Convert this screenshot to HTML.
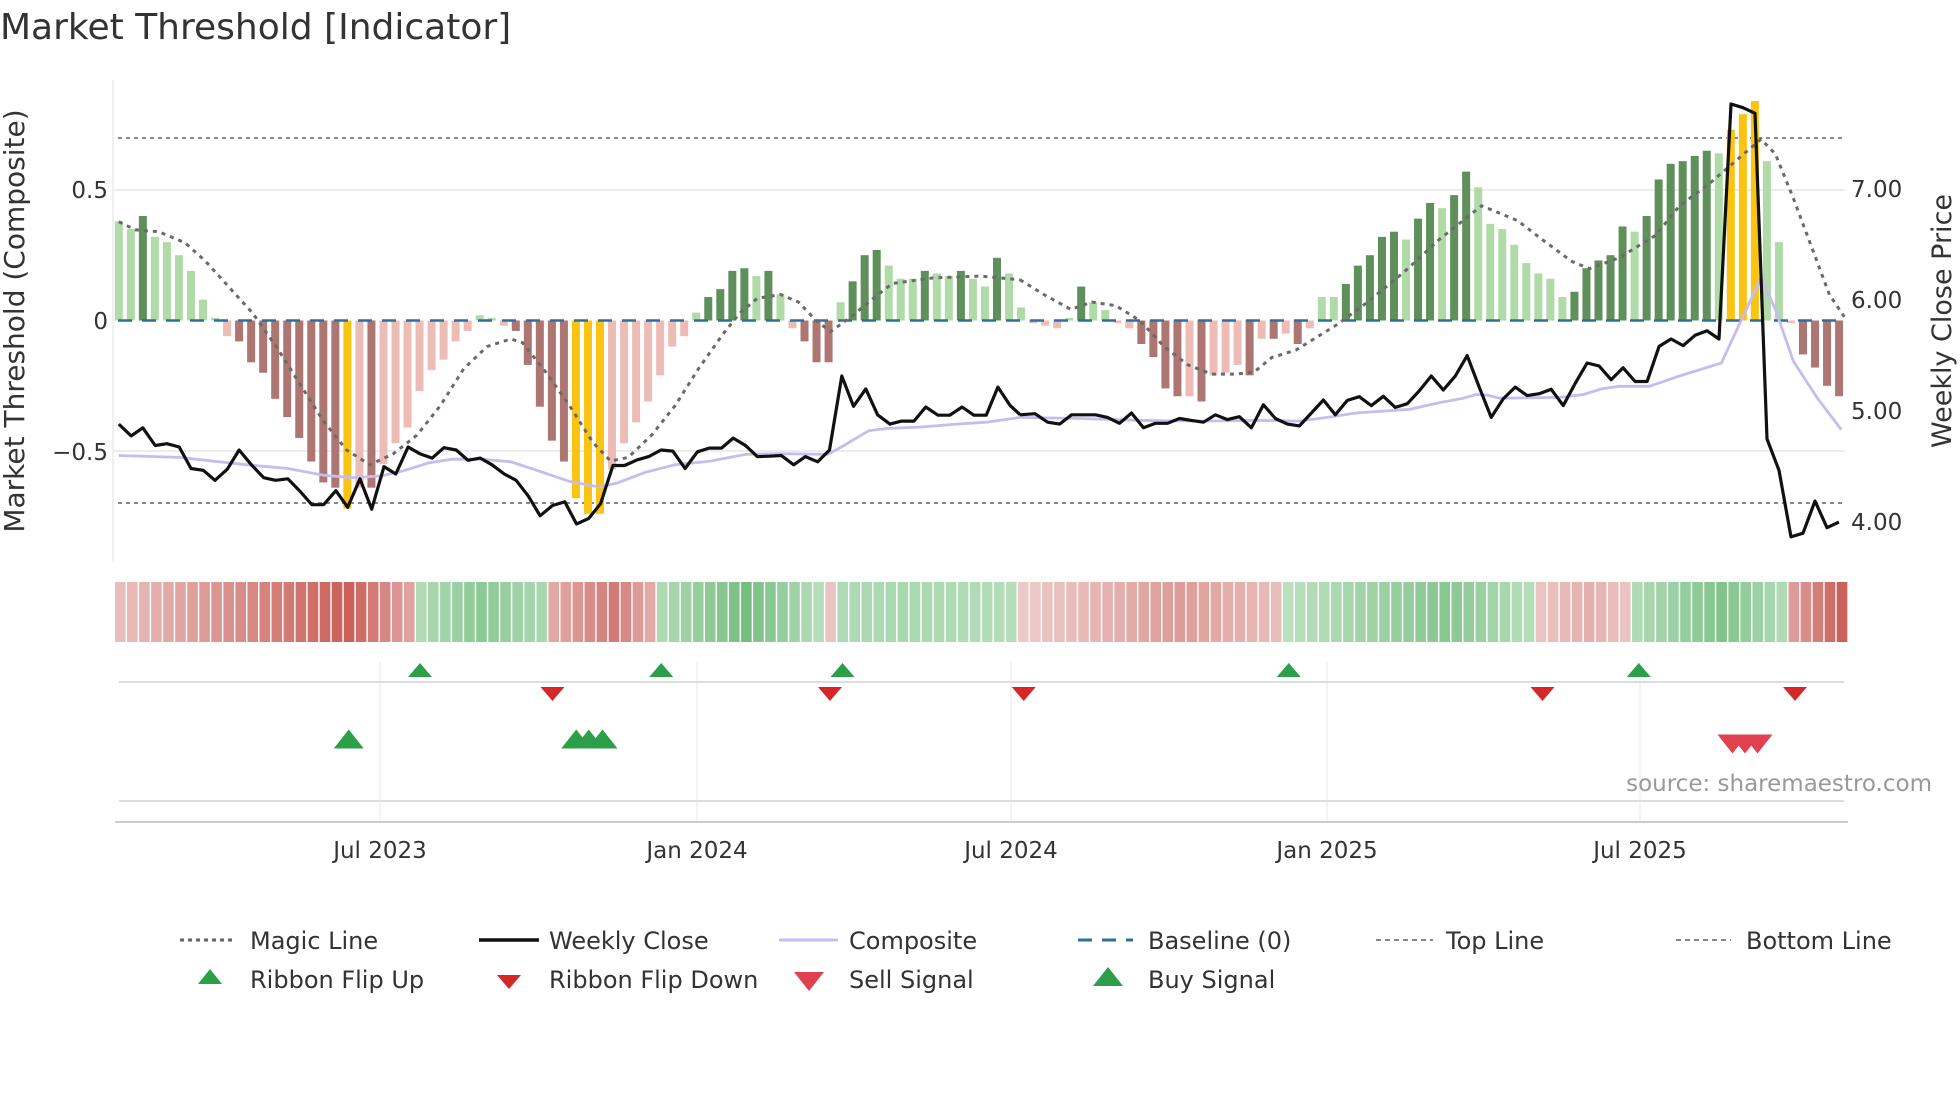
<!DOCTYPE html>
<html><head><meta charset="utf-8"><style>
html,body{margin:0;padding:0;background:#fff;}
svg{display:block;font-family:"DejaVu Sans","Liberation Sans",sans-serif;}
</style></head><body>
<svg id="s" width="1960" height="1102" viewBox="0 0 1960 1102" xmlns="http://www.w3.org/2000/svg">
<rect width="1960" height="1102" fill="#fff"/>
<text x="0" y="39" font-size="36" fill="#333">Market Threshold [Indicator]</text>
<line x1="113" y1="190" x2="1845" y2="190" stroke="#ececec" stroke-width="2"/>
<line x1="113" y1="451" x2="1845" y2="451" stroke="#ececec" stroke-width="2"/>
<line x1="113" y1="80" x2="113" y2="562" stroke="#ececec" stroke-width="1.5"/>
<line x1="118" y1="138" x2="1842" y2="138" stroke="#888" stroke-width="2" stroke-dasharray="4,4"/>
<line x1="118" y1="503" x2="1842" y2="503" stroke="#888" stroke-width="2" stroke-dasharray="4,4"/>
<g id="bars"></g>
<line x1="118" y1="320.5" x2="1842" y2="320.5" stroke="#2f6f9e" stroke-width="2.5" stroke-dasharray="14,10"/>
<g id="lines"></g>
<g font-size="23" fill="#333">
<text x="108" y="198" text-anchor="end">0.5</text>
<text x="108" y="329" text-anchor="end">0</text>
<text x="108" y="460" text-anchor="end">−0.5</text>
<text x="1851" y="197">7.00</text>
<text x="1851" y="308">6.00</text>
<text x="1851" y="419">5.00</text>
<text x="1851" y="530">4.00</text>
</g>
<text transform="translate(24,321) rotate(-90)" font-size="28" fill="#333" text-anchor="middle">Market Threshold (Composite)</text>
<text transform="translate(1951,321) rotate(-90)" font-size="27" fill="#333" text-anchor="middle">Weekly Close Price</text>
<g id="rib"></g>
<g stroke="#f0f0f0" stroke-width="1.5">
<line x1="380" y1="662" x2="380" y2="822"/><line x1="697" y1="662" x2="697" y2="822"/><line x1="1011" y1="662" x2="1011" y2="822"/><line x1="1327" y1="662" x2="1327" y2="822"/><line x1="1640" y1="662" x2="1640" y2="822"/>
</g>
<line x1="119" y1="682" x2="1844" y2="682" stroke="#ddd" stroke-width="2"/>
<line x1="119" y1="801" x2="1844" y2="801" stroke="#ddd" stroke-width="2"/>
<line x1="115" y1="822" x2="1848" y2="822" stroke="#ccc" stroke-width="2"/>
<g id="sig"></g>
<text x="1932" y="791" font-size="23" fill="#999" text-anchor="end">source: sharemaestro.com</text>
<g font-size="23" fill="#333" text-anchor="middle">
<text x="380" y="858">Jul 2023</text><text x="697" y="858">Jan 2024</text><text x="1011" y="858">Jul 2024</text><text x="1327" y="858">Jan 2025</text><text x="1640" y="858">Jul 2025</text>
</g>
<g font-size="24" fill="#333">
<line x1="180" y1="940" x2="235" y2="940" stroke="#666" stroke-width="3" stroke-dasharray="4,4"/><text x="250" y="949">Magic Line</text>
<line x1="479" y1="940" x2="539" y2="940" stroke="#111" stroke-width="3.5"/><text x="549" y="949">Weekly Close</text>
<line x1="779" y1="940" x2="838" y2="940" stroke="#c5bdf0" stroke-width="3"/><text x="849" y="949">Composite</text>
<line x1="1078" y1="940" x2="1133" y2="940" stroke="#2f6f9e" stroke-width="3" stroke-dasharray="14,10"/><text x="1148" y="949">Baseline (0)</text>
<line x1="1376" y1="940" x2="1433" y2="940" stroke="#888" stroke-width="2" stroke-dasharray="5,4"/><text x="1446" y="949">Top Line</text>
<line x1="1676" y1="940" x2="1731" y2="940" stroke="#888" stroke-width="2" stroke-dasharray="5,4"/><text x="1746" y="949">Bottom Line</text>
<polygon points="210,969 198,984 222,984" fill="#2ca048"/><text x="250" y="988">Ribbon Flip Up</text>
<polygon points="497,975 521,975 509,989" fill="#d62728"/><text x="549" y="988">Ribbon Flip Down</text>
<polygon points="794,972 824,972 809,991" fill="#e0404f"/><text x="849" y="988">Sell Signal</text>
<polygon points="1108,967 1093,986 1123,986" fill="#2ca048"/><text x="1148" y="988">Buy Signal</text>
</g>
</svg>
<script>
var NS="http://www.w3.org/2000/svg";
function el(p,t,a){var e=document.createElementNS(NS,t);for(var k in a)e.setAttribute(k,a[k]);p.appendChild(e);return e;}
var data="L.38 L.35 G.40 L.32 L.30 L.25 L.19 L.08 L.01 p-.06 r-.08 r-.16 r-.20 r-.30 r-.37 r-.45 r-.54 r-.62 r-.64 y-.72 p-.64 r-.64 p-.55 p-.47 p-.41 p-.27 p-.19 p-.15 p-.08 p-.04 L.02 L.01 p-.02 r-.04 r-.17 r-.33 r-.46 r-.54 y-.68 y-.74 y-.74 p-.57 p-.47 p-.39 p-.31 p-.21 p-.10 p-.06 L.03 G.09 G.12 G.19 G.20 L.17 G.19 L.10 p-.03 r-.08 r-.16 r-.16 L.07 G.15 G.25 G.27 L.21 L.16 L.16 G.19 L.18 L.17 G.19 L.16 L.13 G.24 L.18 L.05 p-.01 p-.02 p-.03 L.01 G.13 L.07 L.04 p-.01 p-.03 r-.09 r-.14 r-.26 r-.29 p-.29 r-.31 p-.21 p-.20 p-.17 r-.21 p-.07 r-.07 p-.05 r-.09 p-.03 L.09 L.09 G.14 G.21 G.25 G.32 G.34 L.31 G.39 G.45 L.43 G.48 G.57 L.51 L.37 L.35 L.29 L.22 L.18 L.16 L.09 G.11 G.20 G.23 G.25 G.36 L.34 G.40 G.54 G.60 G.61 G.63 G.65 L.64 y.73 y.79 y.84 L.61 L.30 p-.01 r-.13 r-.18 r-.25 r-.29".split(" ");
var col={L:"#b0dba9",G:"#5f8f5b",p:"#edbcb7",r:"#ad7672",y:"#fbc412"};
var bg=document.getElementById("bars");
data.forEach(function(d,i){var c=d[0],v=parseFloat(d.slice(1));var x=118.8+i*12.03;var h=v*261.2;
 var y=h>0?320.5-h:320.5;el(bg,"rect",{x:x-4,y:y,width:8,height:Math.max(Math.abs(h),0.5),fill:col[c]});});
var lg=document.getElementById("lines");
function pl(pts,tx,sx,style){var s=pts.map(function(p){return (tx+p[0]/sx).toFixed(1)+","+(80+p[1]/2.703).toFixed(1);}).join(" ");
 var a={points:s,fill:"none"};for(var k in style)a[k]=style[k];el(lg,"polyline",a);}
var comp1=[[32,1015],[135,1020],[250,1040],[320,1050],[380,1068],[430,1075],[480,1070],[520,1055],[560,1035],[600,1025],[650,1025],[700,1032],[750,1058],[800,1085],[850,1100],[880,1090],[930,1060],[980,1040],[1040,1030],[1100,1012],[1160,1010],[1240,1012],[1260,995],[1310,948],[1340,942],[1400,938],[1460,930],[1510,925],[1568,912]];
var comp2=[[0,912],[100,915],[200,920],[300,922],[400,920],[466,922],[520,910],[560,900],[650,890],[700,872],[740,860],[760,850],[780,852],[800,860],[900,858],[940,850],[970,835],[1000,828],[1050,828],[1100,800],[1170,765],[1200,660],[1236,535],[1260,620],[1290,760],[1330,860],[1370,945]];
var mag1=[[32,383],[60,405],[100,410],[145,440],[180,490],[220,560],[260,630],[300,720],[340,820],[380,920],[420,1000],[460,1040],[500,1010],[540,960],[580,880],[620,780],[660,720],[700,700],[720,710],[760,790],[800,880],[840,980],[870,1030],[900,1020],[940,960],[980,880],[1020,780],[1060,690],[1090,630],[1120,590],[1160,580],[1190,600],[1220,650],[1245,680],[1280,640],[1310,600],[1350,550],[1420,535],[1500,530],[1568,540]];
var mag2=[[0,540],[40,580],[85,620],[120,600],[160,610],[200,650],[240,720],[280,770],[320,795],[360,795],[390,790],[420,750],[460,730],[490,700],[530,660],[580,600],[640,520],[700,430],[770,340],[830,380],[870,430],[920,490],[950,510],[1000,480],[1060,420],[1100,340],[1150,280],[1200,210],[1236,160],[1260,200],[1290,320],[1320,450],[1350,580],[1375,640]];
var blk1=[[32,930],[53,962],[73,940],[94,988],[114,983],[135,992],[155,1050],[176,1055],[196,1082],[217,1052],[237,1000],[258,1040],[279,1075],[299,1082],[320,1078],[340,1110],[361,1148],[381,1148],[402,1110],[422,1155],[443,1078],[463,1160],[484,1045],[504,1065],[525,992],[545,1010],[566,1022],[586,994],[607,1000],[627,1028],[648,1022],[668,1040],[689,1065],[709,1082],[730,1125],[750,1178],[771,1150],[792,1140],[812,1200],[833,1185],[853,1145],[874,1042],[894,1042],[915,1027],[935,1018],[956,1000],[976,1003],[997,1050],[1018,1005],[1038,995],[1059,995],[1079,968],[1100,988],[1120,1018],[1141,1017],[1161,1015],[1182,1040],[1202,1018],[1223,1032],[1243,1000],[1264,800],[1284,882],[1305,835],[1325,905],[1346,930],[1366,922],[1387,922],[1407,884],[1428,906],[1448,906],[1469,884],[1489,906],[1510,906],[1530,830],[1551,880],[1568,905]];
var blk2=[[0,905],[25,902],[46,925],[66,930],[86,905],[106,905],[126,905],[146,912],[166,928],[186,900],[206,940],[226,928],[246,928],[266,915],[286,920],[306,925],[326,905],[346,918],[366,910],[386,940],[406,878],[426,915],[446,930],[466,935],[486,900],[506,865],[526,905],[546,866],[566,856],[586,880],[606,855],[626,885],[646,875],[666,840],[686,800],[706,838],[726,800],[746,745],[766,830],[786,912],[806,862],[826,830],[846,853],[866,848],[886,836],[906,880],[926,820],[946,765],[966,773],[986,810],[1006,778],[1026,815],[1046,815],[1066,720],[1086,700],[1106,718],[1126,690],[1146,678],[1166,700],[1186,65],[1206,75],[1226,90],[1246,970],[1266,1055],[1286,1235],[1306,1225],[1326,1138],[1346,1210],[1366,1195]];
var cs={stroke:"#c5bdf0","stroke-width":2.8};
pl(comp1,100,1.704,cs);pl(comp2,1020,1.668,cs);
var ms={stroke:"#6a6a6a","stroke-width":3,"stroke-dasharray":"4,5"};
pl(mag1,100,1.704,ms);pl(mag2,1020,1.668,ms);
var bs={stroke:"#111","stroke-width":3.2,"stroke-linejoin":"round"};
pl(blk1,100,1.704,bs);pl(blk2,1020,1.668,bs);
var rg=document.getElementById("rib");
var segs=[[0,24,"r",[0.25,0.95,0.45],19],[25,35,"g",[0.35,0.65,0.4],30],[36,44,"r",[0.4,0.75,0.4],41],[45,58,"g",[0.35,0.85,0.3],52],[59,59,"r",[0.2,0.2,0.2],59],[60,74,"g",[0.35,0.4,0.3],65],[75,96,"r",[0.15,0.5,0.25],88],[97,117,"g",[0.25,0.7,0.3],110],[118,125,"r",[0.2,0.35,0.2],122],[126,138,"g",[0.35,0.75,0.35],133],[139,143,"r",[0.5,0.95,0.95],143]];
function mix(a,b,t){return "rgb("+a.map(function(v,i){return Math.round(v+(b[i]-v)*t);}).join(",")+")";}
var R0=[243,222,221],R1=[200,90,84],G0=[215,238,217],G1=[100,182,112];
segs.forEach(function(s){for(var i=s[0];i<=s[1];i++){var t;var a=s[3];
 if(i<=s[4]){t=s[4]==s[0]?a[1]:a[0]+(a[1]-a[0])*(i-s[0])/(s[4]-s[0]);}else{t=a[1]+(a[2]-a[1])*(i-s[4])/(s[1]-s[4]);}
 var c=s[2]=="r"?mix(R0,R1,t):mix(G0,G1,t);
 el(rg,"rect",{x:115+i*12.04,y:582,width:10.6,height:60,fill:c});}});
var sg=document.getElementById("sig");
function up(x,y,w,h,c){el(sg,"polygon",{points:(x)+","+(y-h/2)+" "+(x-w/2)+","+(y+h/2)+" "+(x+w/2)+","+(y+h/2),fill:c});}
function dn(x,y,w,h,c){el(sg,"polygon",{points:(x-w/2)+","+(y-h/2)+" "+(x+w/2)+","+(y-h/2)+" "+(x)+","+(y+h/2),fill:c});}
[336,529,674,1031,1311].forEach(function(x){up(x*1.25,670,24,14,"#2ca048");});
[442,664,819,1234,1436].forEach(function(x){dn(x*1.25,694,24,14,"#d62728");});
[279,461,471,482].forEach(function(x){up(x*1.25,739,30,19,"#2ca048");});
[1386,1396,1406].forEach(function(x){dn(x*1.25,744,30,19,"#e0404f");});
</script>
</body></html>
